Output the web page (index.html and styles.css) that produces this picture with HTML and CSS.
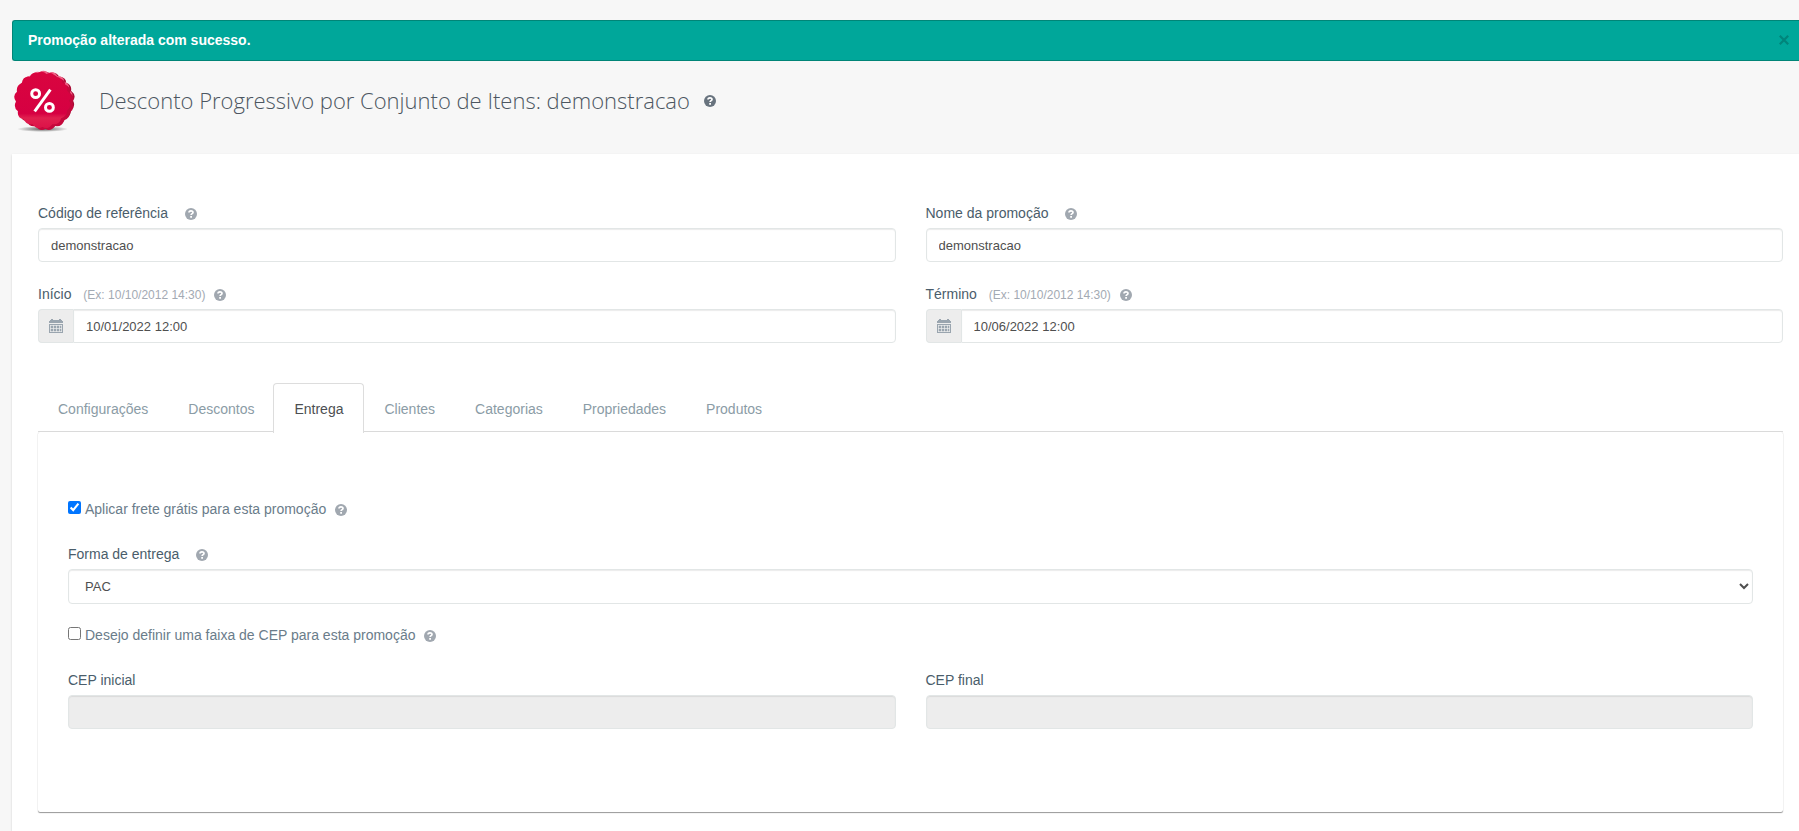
FILE: index.html
```html
<!DOCTYPE html>
<html lang="pt-BR">
<head>
<meta charset="utf-8">
<title>Desconto Progressivo por Conjunto de Itens</title>
<link rel="stylesheet" href="styles.css">
</head>
<body>
<svg class="defs" aria-hidden="true">
  <symbol id="help" viewBox="0 0 12 12">
    <circle cx="6" cy="6" r="6" fill="currentColor"/>
    <path d="M4 4.6C4 2.5 8 2.4 8 4.4C8 5.6 6.1 5.6 6.1 7" fill="none" stroke="#fff" stroke-width="1.7"/>
    <path d="M5.2 8h1.8v1.7H5.2z" fill="#fff"/>
  </symbol>
  <symbol id="calendar" viewBox="0 0 14 14">
    <path d="M1 1h1V0h2v1h6V0h2v1h1v1h1v2H0V2h1zM0 5h14v9H0z" fill="currentColor"/>
    <path d="M1 6.5h12M1 9.5h12M1 12.5h12M1.5 6v7M4.5 6v7M7.5 6v7M10.5 6v7M12.5 6v7" stroke="#eee" stroke-width=".7"/>
  </symbol>
</svg>

<div class="alert" role="status">
  <strong>Promoção alterada com sucesso.</strong>
  <button class="alert-close" type="button" aria-label="Fechar">
    <svg viewBox="0 0 9 9"><path d="M.7.7l7.6 7.6M8.3.7L.7 8.3" stroke="currentColor" stroke-width="2"/></svg>
  </button>
</div>

<header class="page-header">
  <svg class="seal" viewBox="0 0 62 64" aria-hidden="true">
    <defs>
      <linearGradient id="face" x1="0" y1="0" x2="0" y2="1">
        <stop offset="0" stop-color="#d9053f"/><stop offset=".74" stop-color="#d60042"/><stop offset=".82" stop-color="#e0204f"/><stop offset="1" stop-color="#dc1248"/>
      </linearGradient>
      <radialGradient id="shade"><stop offset="0" stop-color="#333" stop-opacity=".8"/><stop offset="1" stop-color="#333" stop-opacity="0"/></radialGradient>
      <path id="scallop" d="M24 2Q29-1 33 3Q39 0 42 6Q49 6 49 12Q55 14 54 20Q60 25 56 30Q59 36 54 40Q54 46 48 48Q46 55 39 54Q34 60 29 57Q23 60 19 54Q12 55 10 49Q3 48 4 41Q-1 37 2 31Q-2 25 3 21Q2 15 8 12Q9 5 16 6Q18 1 24 2Z"/>
    </defs>
    <ellipse cx="29" cy="60" rx="26" ry="3" fill="url(#shade)"/>
    <use href="#scallop" x="4" y="1" fill="#a90b35"/>
    <use href="#scallop" x="2" y="0" fill="#ef5f84"/>
    <use href="#scallop" x="3" y="3" fill="#c5083c"/>
    <use href="#scallop" x="0" y="1" fill="url(#face)"/>
    <path d="M37 20L21 42" stroke="#fff" stroke-width="3"/>
    <circle cx="22" cy="24" r="4" fill="none" stroke="#fff" stroke-width="3"/>
    <circle cx="36" cy="38" r="4" fill="none" stroke="#fff" stroke-width="3"/>
  </svg>
  <h1 class="page-title">Desconto Progressivo por Conjunto de Itens: demonstracao</h1>
  <svg class="help help-dark"><use href="#help"/></svg>
</header>

<main class="panel">
  <form class="grid">
    <div class="field">
      <div class="label-row"><label for="codigo">Código de referência</label><svg class="help help-far"><use href="#help"/></svg></div>
      <input class="control" id="codigo" type="text" value="demonstracao">
    </div>
    <div class="field">
      <div class="label-row"><label for="nome">Nome da promoção</label><svg class="help help-far"><use href="#help"/></svg></div>
      <input class="control" id="nome" type="text" value="demonstracao">
    </div>
    <div class="field">
      <div class="label-row"><label for="inicio">Início <small class="hint">(Ex: 10/10/2012 14:30)</small></label><svg class="help"><use href="#help"/></svg></div>
      <div class="group"><span class="addon"><svg class="calendar"><use href="#calendar"/></svg></span><input class="control" id="inicio" type="text" value="10/01/2022 12:00"></div>
    </div>
    <div class="field">
      <div class="label-row"><label for="termino">Término <small class="hint">(Ex: 10/10/2012 14:30)</small></label><svg class="help"><use href="#help"/></svg></div>
      <div class="group"><span class="addon"><svg class="calendar"><use href="#calendar"/></svg></span><input class="control" id="termino" type="text" value="10/06/2022 12:00"></div>
    </div>
  </form>

  <nav class="tabs">
    <a class="tab" href="#">Configurações</a>
    <a class="tab" href="#">Descontos</a>
    <a class="tab tab-active" href="#" aria-current="page">Entrega</a>
    <a class="tab" href="#">Clientes</a>
    <a class="tab" href="#">Categorias</a>
    <a class="tab" href="#">Propriedades</a>
    <a class="tab" href="#">Produtos</a>
  </nav>

  <section class="tab-content">
    <div class="check-row">
      <input class="check" id="frete" type="checkbox" checked><label for="frete">Aplicar frete grátis para esta promoção</label><svg class="help"><use href="#help"/></svg>
    </div>
    <div class="field">
      <div class="label-row"><label for="forma">Forma de entrega</label><svg class="help help-far"><use href="#help"/></svg></div>
      <select class="control" id="forma"><option>PAC</option></select>
    </div>
    <div class="check-row">
      <input class="check" id="faixa" type="checkbox"><label for="faixa">Desejo definir uma faixa de CEP para esta promoção</label><svg class="help"><use href="#help"/></svg>
    </div>
    <div class="grid">
      <div class="field"><div class="label-row"><label for="cep-inicial">CEP inicial</label></div><input class="control" id="cep-inicial" type="text" disabled></div>
      <div class="field"><div class="label-row"><label for="cep-final">CEP final</label></div><input class="control" id="cep-final" type="text" disabled></div>
    </div>
  </section>
</main>
</body>
</html>
```

FILE: styles.css
```css
* { box-sizing: border-box; }

body {
  display: flex;
  flex-direction: column;
  min-height: 100vh;
  margin: 0;
  padding: 20px 0 0 12px;
  background: #f7f7f7;
  color: #4a5d6b;
  font: 14px/20px "Liberation Sans", Arial, sans-serif;
}

.defs { position: absolute; width: 0; height: 0; }

.alert {
  display: flex;
  align-items: center;
  justify-content: space-between;
  padding: 9px 8px 10px 15px;
  border: 1px solid #008577;
  border-right: 0;
  border-radius: 3px 0 0 3px;
  background: #00a79a;
  color: #fff;
}
.alert-close {
  display: flex;
  padding: 2px;
  border: 0;
  background: none;
  color: #00857b;
}
.alert-close svg { width: 10px; height: 10px; }

.page-header {
  display: flex;
  align-items: center;
  height: 93px;
  padding: 0 0 15px 2px;
}
.seal { width: 61px; height: 63px; margin-top: 3px; }
.page-title {
  margin: 0 14px 0 24px;
  color: #4c5661;
  font: 300 22px/30px "Open Sans", sans-serif;
}

.help { flex: none; width: 12px; height: 12px; margin: 2px 0 0 9px; color: #a1a8b0; }
.help-far { margin-left: 17px; }
.help-dark { margin-left: 0; color: #68737e; }

.panel {
  flex: 1;
  padding: 49px 16px 18px 26px;
  background: #fff;
  box-shadow: 0 1px 2px rgba(0, 0, 0, .16);
}

.grid {
  display: grid;
  grid-template-columns: 1fr 1fr;
  gap: 22px 30px;
}
.label-row { display: flex; align-items: center; margin-bottom: 5px; }
.hint { margin-left: 8px; color: #a3aab3; font-size: 12px; line-height: 1; }

.control {
  display: block;
  width: 100%;
  height: 34px;
  padding: 6px 12px;
  border: 1px solid #e2e6e6;
  border-radius: 4px;
  background: #fff;
  box-shadow: inset 0 1px 1px rgba(0, 0, 0, .08);
  color: #4f4f4f;
  font: 13px/20px "Liberation Sans", Arial, sans-serif;
}
.control:disabled { background: #ededed; }

.group { display: flex; }
.group .control { border-radius: 0 4px 4px 0; }
.addon {
  display: flex;
  align-items: center;
  justify-content: center;
  width: 35px;
  flex: none;
  border: 1px solid #e2e6e6;
  border-right: 0;
  border-radius: 4px 0 0 4px;
  background: #ededed;
  color: #9aa5af;
}
.calendar { width: 14px; height: 14px; }

.tabs {
  display: flex;
  margin-top: 40px;
  border-bottom: 1px solid #ddd;
}
.tab {
  margin-bottom: -2px;
  padding: 15px 19px 14px;
  border: 1px solid transparent;
  border-bottom: 0;
  border-radius: 4px 4px 0 0;
  color: #8b9ca6;
  text-decoration: none;
}
.tab-active {
  position: relative;
  margin-left: -1px;
  padding-right: 20px;
  padding-left: 20px;
  border-color: #ddd;
  background: #fff;
  color: #4c4f52;
}

.tab-content {
  padding: 67px 30px 83px;
  border-radius: 2px;
  background: #fff;
  box-shadow: 0 1px 1px rgba(0, 0, 0, .4), 0 0 1px rgba(0, 0, 0, .15);
}
.tab-content select.control { height: 35px; }

.check-row { display: flex; align-items: center; margin-bottom: 25px; color: #6a7c8a; }
.field + .check-row { margin-top: 21px; }
.check { width: 13px; height: 13px; margin: 0 4px 3px 0; }
```
